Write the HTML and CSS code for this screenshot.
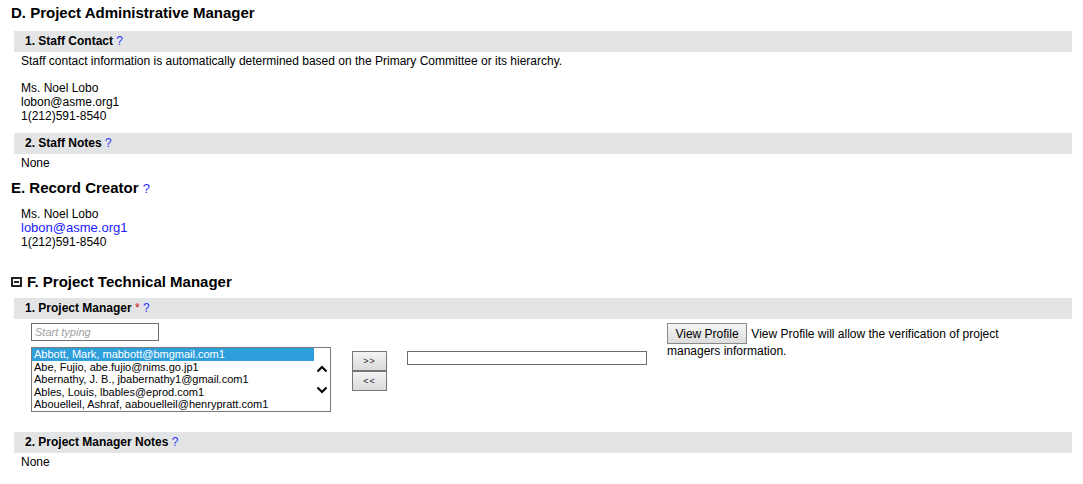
FILE: index.html
```html
<!DOCTYPE html>
<html lang="en">
<head>
  <meta charset="UTF-8" />
  <title>Project Record</title>
  <link rel="stylesheet" href="styles.css">
</head>
<body>
  <h2 class="section-title first">D. Project Administrative Manager</h2>

  <div class="bar">1. Staff Contact <span class="help">?</span></div>
  <div class="field">
    <p class="note">Staff contact information is automatically determined based on the Primary Committee or its hierarchy.</p>
    <div class="contact gap">
      Ms. Noel Lobo<br>
      lobon@asme.org1<br>
      1(212)591-8540
    </div>
  </div>

  <div class="bar bar-next">2. Staff Notes <span class="help">?</span></div>
  <div class="field">
    <p class="note">None</p>
  </div>

  <h2 class="section-title">E. Record Creator <span class="help">?</span></h2>
  <div class="field">
    <div class="contact gap">
      Ms. Noel Lobo<br>
      <a href="#" class="mail">lobon@asme.org1</a><br>
      1(212)591-8540
    </div>
  </div>

  <h2 class="section-title collapsible"><span class="toggle"></span>F. Project Technical Manager</h2>

  <div class="bar bar-tight">1. Project Manager <span class="req">*</span> <span class="help">?</span></div>
  <div class="picker">
    <div class="picker-source">
      <input type="text" class="search" placeholder="Start typing">
      <div class="listbox">
        <ul class="options">
          <li class="selected">Abbott, Mark, mabbott@bmgmail.com1</li>
          <li>Abe, Fujio, abe.fujio@nims.go.jp1</li>
          <li>Abernathy, J. B., jbabernathy1@gmail.com1</li>
          <li>Ables, Louis, lbables@eprod.com1</li>
          <li>Abouelleil, Ashraf, aabouelleil@henrypratt.com1</li>
        </ul>
        <div class="scroller">
          <svg width="12" height="8" viewBox="0 0 12 8"><path d="M1.5 6.5 L6 2 L10.5 6.5" fill="none" stroke="#000" stroke-width="2"/></svg>
          <svg width="12" height="8" viewBox="0 0 12 8"><path d="M1.5 1.5 L6 6 L10.5 1.5" fill="none" stroke="#000" stroke-width="2"/></svg>
        </div>
      </div>
    </div>
    <div class="movers">
      <button type="button" class="move">&gt;&gt;</button>
      <button type="button" class="move">&lt;&lt;</button>
    </div>
    <input type="text" class="chosen">
    <p class="profile"><button type="button" class="btn">View Profile</button> <span>View Profile will allow the verification of project managers information.</span></p>
  </div>

  <div class="bar bar-notes">2. Project Manager Notes <span class="help">?</span></div>
  <div class="field">
    <p class="note">None</p>
  </div>
</body>
</html>
```

FILE: styles.css
```css
* {
  margin: 0;
  padding: 0;
  box-sizing: border-box;
}

body {
  font-family: "Liberation Sans", Arial, sans-serif;
  font-size: 12px;
  line-height: 14px;
  color: #000;
  background: #fff;
  padding: 4px 11px 0 11px;
}

.section-title {
  font-size: 15px;
  font-weight: bold;
  line-height: 18px;
  margin-top: 9px;
}

.section-title.first {
  margin-top: 0;
}

.section-title.collapsible {
  margin-top: 24px;
  display: flex;
  align-items: center;
}

.toggle {
  width: 11px;
  height: 10px;
  border: 2px solid #222;
  margin-right: 5px;
  position: relative;
  background: #fff;
}

.toggle::after {
  content: '';
  position: absolute;
  left: 1px;
  right: 1px;
  top: 2px;
  height: 2px;
  background: #222;
}

.help {
  color: #3030ff;
  font-weight: normal;
  font-size: 12px;
}

.section-title .help {
  font-size: 13px;
}

.req {
  color: #d01010;
  font-weight: normal;
}

.bar {
  margin: 9px 0 0 3px;
  background: #e3e4e6;
  height: 21px;
  line-height: 21px;
  padding-left: 11px;
  font-weight: bold;
}

.bar-next {
  margin-top: 10px;
}

.bar-tight {
  margin-top: 7px;
}

.bar-notes {
  margin-top: 20px;
}

.field {
  padding-left: 10px;
}

.note {
  margin-top: 2px;
}

.contact.gap {
  margin-top: 13px;
}

.section-title + .field .contact.gap {
  margin-top: 9px;
}

.mail {
  color: #1a1aff;
  font-size: 13px;
  text-decoration: none;
}

.picker {
  display: flex;
  align-items: flex-start;
  padding-left: 20px;
  margin-top: 4px;
}

.picker-source {
  display: flex;
  flex-direction: column;
  gap: 6px;
  width: 300px;
}

.search {
  width: 128px;
  height: 18px;
  border: 1px solid #707070;
  font-family: inherit;
  font-size: 11px;
  padding: 0 3px;
}

.search::placeholder {
  color: #a0a0a0;
  font-style: italic;
}

.listbox {
  display: flex;
  height: 65px;
  border: 1px solid #7a7a7a;
  overflow: hidden;
}

.options {
  list-style: none;
  flex: 1;
  font-size: 11px;
  line-height: 12.6px;
}

.options li {
  padding-left: 2px;
  white-space: nowrap;
}

.options .selected {
  background: #2f9fdc;
  color: #fff;
}

.scroller {
  width: 16px;
  display: flex;
  flex-direction: column;
  align-items: center;
  gap: 13px;
  padding-top: 17px;
}

.movers {
  display: flex;
  flex-direction: column;
  margin: 28px 0 0 21px;
}

.move {
  width: 35px;
  height: 20px;
  border: 1px solid #767676;
  background: linear-gradient(#f4f4f4, #dadada);
  font-family: inherit;
  font-size: 9px;
  letter-spacing: 1px;
  color: #223;
}

.chosen {
  width: 240px;
  height: 14px;
  margin: 28px 0 0 20px;
  border: 1px solid #6e6e6e;
}

.profile {
  margin-left: 20px;
  width: 370px;
}

.btn {
  width: 80px;
  height: 21px;
  border: 1px solid #8a8a8a;
  background: linear-gradient(#f5f5f5, #dddddd);
  font-family: inherit;
  font-size: 12px;
  color: #000;
  margin-right: 1px;
}
```
